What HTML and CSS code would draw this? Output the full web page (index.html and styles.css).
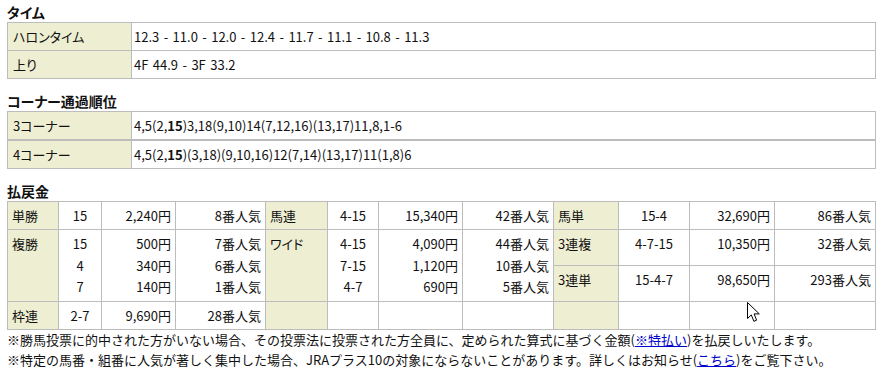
FILE: index.html
```html
<!DOCTYPE html>
<html lang="ja">
<head>
<meta charset="utf-8">
<title>レース結果</title>
<link rel="stylesheet" href="styles.css">
</head>
<body>
<div class="page">
  <h2 class="sec-title">タイム</h2>
  <div class="info">
    <div class="lbl">ハロンタイム</div><div class="val laps">12.3 - 11.0 - 12.0 - 12.4 - 11.7 - 11.1 - 10.8 - 11.3</div>
    <div class="lbl">上り</div><div class="val laps">4F 44.9 - 3F 33.2</div>
  </div>

  <h2 class="sec-title">コーナー通過順位</h2>
  <div class="info">
    <div class="lbl">3コーナー</div><div class="val">4,5(2,<b>15</b>)3,18(9,10)14(7,12,16)(13,17)11,8,1-6</div>
  </div>
  <div class="info">
    <div class="lbl">4コーナー</div><div class="val">4,5(2,<b>15</b>)(3,18)(9,10,16)12(7,14)(13,17)11(1,8)6</div>
  </div>

  <h2 class="sec-title">払戻金</h2>
  <div class="pay">
    <div class="lbl r1">単勝</div><div class="num r1">15</div><div class="yen r1">2,240円</div><div class="nin r1">8番人気</div>
    <div class="lbl r1">馬連</div><div class="num r1">4-15</div><div class="yen r1">15,340円</div><div class="nin r1">42番人気</div>
    <div class="lbl r1">馬単</div><div class="num r1">15-4</div><div class="yen r1">32,690円</div><div class="nin r1">86番人気</div>

    <div class="lbl r2">複勝</div>
    <div class="num r2">15<br>4<br>7</div>
    <div class="yen r2">500円<br>340円<br>140円</div>
    <div class="nin r2">7番人気<br>6番人気<br>1番人気</div>
    <div class="lbl r2">ワイド</div>
    <div class="num r2">4-15<br>7-15<br>4-7</div>
    <div class="yen r2">4,090円<br>1,120円<br>690円</div>
    <div class="nin r2">44番人気<br>10番人気<br>5番人気</div>
    <div class="lbl">3連複</div><div class="num">4-7-15</div><div class="yen">10,350円</div><div class="nin">32番人気</div>
    <div class="lbl">3連単</div><div class="num">15-4-7</div><div class="yen">98,650円</div><div class="nin">293番人気</div>

    <div class="lbl">枠連</div><div class="num">2-7</div><div class="yen">9,690円</div><div class="nin">28番人気</div>
    <div class="lbl"></div><div class="num"></div><div class="yen"></div><div class="nin"></div>
    <div class="lbl"></div><div class="num"></div><div class="yen"></div><div class="nin"></div>
  </div>

  <p class="note">※勝馬投票に的中された方がいない場合、その投票法に投票された方全員に、定められた算式に基づく金額(<a href="#">※特払い</a>)を払戻しいたします。</p>
  <p class="note">※特定の馬番・組番に人気が著しく集中した場合、JRAプラス10の対象にならないことがあります。詳しくはお知らせ(<a href="#">こちら</a>)をご覧下さい。</p>
</div>

<svg class="cursor" width="14" height="22" viewBox="0 0 14 22" aria-hidden="true">
  <path d="M0.5 0.5 L0.5 16.5 L4.3 12.9 L6.9 19.3 L9.6 18.2 L7.1 11.9 L12.3 11.9 Z" fill="#fff" stroke="#000" stroke-width="1"/>
</svg>
</body>
</html>
```

FILE: styles.css
```css
html, body {
  margin: 0;
  padding: 0;
  background: #fff;
}

body {
  position: relative;
  width: 886px;
  height: 379px;
  overflow: hidden;
  font-family: "Noto Sans CJK JP", "Noto Sans", sans-serif;
  font-size: 13px;
  color: #111;
}

.page {
  padding: 0 10px 0 7px;
}

.sec-title {
  margin: 12px 0 0;
  height: 20px;
  line-height: 20px;
  font-size: 14px;
  font-weight: bold;
  color: #111;
  font-feature-settings: "palt";
}

.sec-title:first-child {
  margin-top: 2px;
}

/* ---- two-column info tables ---- */
.info {
  display: grid;
  grid-template-columns: 124px 744px;
  grid-auto-rows: 28px;
  width: 869px;
  box-sizing: border-box;
  border-top: 1px solid #bcbcbc;
  border-left: 1px solid #bcbcbc;
  font-feature-settings: "palt";
}

.info > div {
  display: flex;
  align-items: center;
  border-right: 1px solid #bcbcbc;
  border-bottom: 1px solid #bcbcbc;
  white-space: nowrap;
}

.info .lbl {
  background: #eeeed2;
  padding-left: 5px;
}

.info .val {
  padding-left: 2px;
}

.info .laps {
  word-spacing: 1.5px;
}

.info b {
  font-weight: bold;
}

/* ---- payout grid ---- */
.pay {
  display: grid;
  grid-template-columns: 51px 43px 74px 90px 62px 51px 84px 91px 65px 71px 85px 101px;
  grid-template-rows: 28px 36px 36px 28px;
  width: 869px;
  box-sizing: border-box;
  border-top: 1px solid #bcbcbc;
  border-left: 1px solid #bcbcbc;
  font-feature-settings: "palt";
}

.pay > div {
  box-sizing: border-box;
  border-right: 1px solid #bcbcbc;
  border-bottom: 1px solid #bcbcbc;
  padding-top: 3px;
  line-height: 21.5px;
  white-space: nowrap;
}

.pay .r2 {
  grid-row: span 2;
}

.pay .lbl {
  background: #eeeed2;
  padding-left: 4px;
}

.pay .num { text-align: center; }
.pay .yen { text-align: right; padding-right: 4px; }
.pay .nin { text-align: right; padding-right: 4px; }

/* ---- notes ---- */
.note {
  margin: 0;
  line-height: 20px;
  font-size: 13px;
  white-space: nowrap;
}

.note a {
  color: #0000cc;
  text-decoration: underline;
}

.cursor {
  position: absolute;
  left: 747px;
  top: 302px;
}
```
